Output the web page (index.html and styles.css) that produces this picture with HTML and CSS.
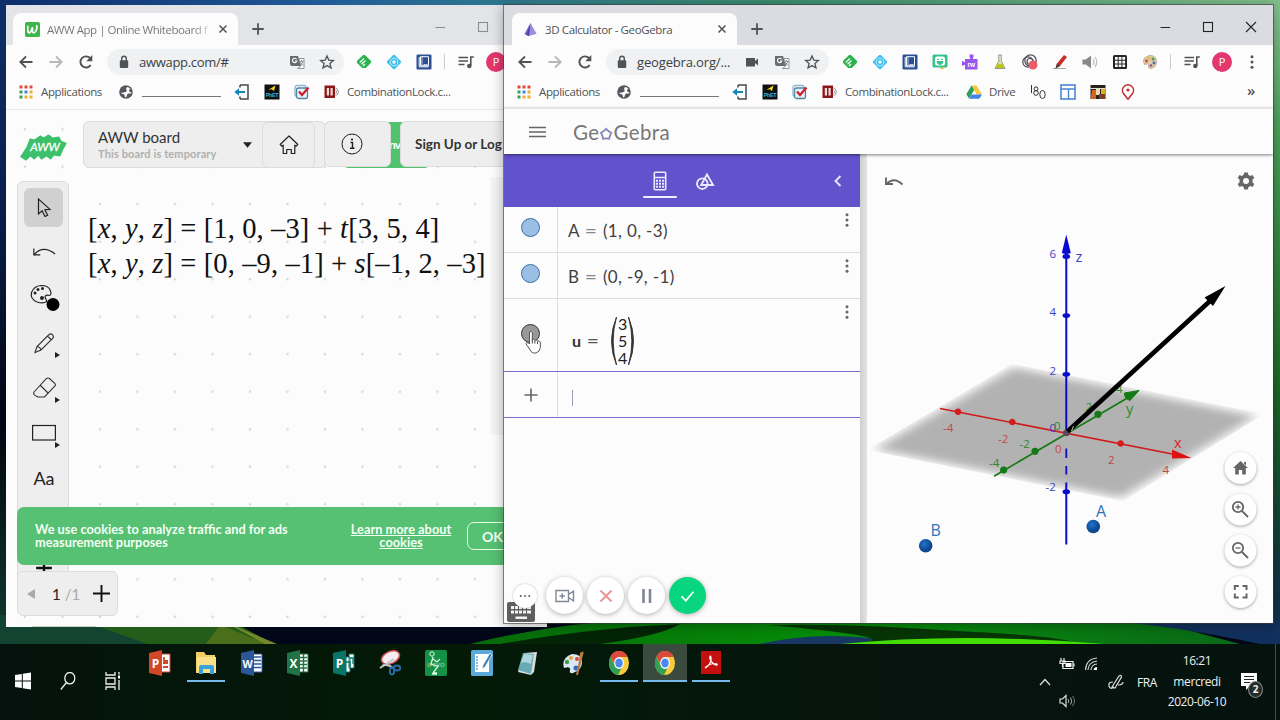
FILE: index.html
```html
<!DOCTYPE html>
<html lang="fr">
<head>
    <meta charset="UTF-8">
    <title>Desktop</title>
    <link rel="stylesheet" href="styles.css">
</head>
<body>
    <!-- Icons used by both browser windows and the taskbar -->
    <svg class="sprite" width="0" height="0">
        <defs>
            <symbol id="i-back" viewBox="0 0 16 16"><path d="M14.5 8H2.5M8 2.5L2.3 8L8 13.5" fill="none" stroke="currentColor" stroke-width="1.8"/></symbol>
            <symbol id="i-forward" viewBox="0 0 16 16"><path d="M1.5 8h12M8 2.5L13.7 8L8 13.5" fill="none" stroke="currentColor" stroke-width="1.8"/></symbol>
            <symbol id="i-reload" viewBox="0 0 16 16"><path d="M12.7 11A5.6 5.6 0 1 1 12.2 4.2" fill="none" stroke="currentColor" stroke-width="1.9"/><path d="M14.3 1v6.2H8.2z" fill="currentColor"/></symbol>
            <symbol id="i-lock" viewBox="0 0 16 16"><rect x="3.8" y="6.3" width="8.4" height="7.7" rx="1" fill="currentColor"/><path d="M5.7 7V4.6a2.3 2.3 0 0 1 4.6 0V7" fill="none" stroke="currentColor" stroke-width="1.4"/></symbol>
            <symbol id="i-camera" viewBox="0 0 16 16"><path d="M2 4h9v3l3-2.5v7L11 9v3.500H2z" fill="currentColor"/></symbol>
            <symbol id="i-translate" viewBox="0 0 16 16"><path d="M1 2h8l3 10H3a2 2 0 0 1-2-2z" fill="#686b6f"/><path d="M9.800 4.500H15V14.500H8.500L12 12z" fill="#fff" stroke="#85888c" stroke-width=".9"/><path d="M7.600 5.300A2.200 2.200 0 1 0 7.800 7H5.900" fill="none" stroke="#fff" stroke-width="1.100"/><path d="M11 7.300h3.500M12.700 6v1.300M14 7.300Q13.300 10 11.500 11M11.500 8.500L14 11.500" fill="none" stroke="#777" stroke-width=".8"/></symbol>
            <symbol id="i-star" viewBox="0 0 16 16"><path d="M8 1.900l1.800 4.200 4.600.4-3.500 3 1.100 4.500L8 11.600 4 14l1.100-4.500-3.500-3 4.600-.4z" fill="none" stroke="currentColor" stroke-width="1.300"/></symbol>
            <symbol id="i-feedly" viewBox="0 0 16 16"><path d="M8 .8q.8 0 1.400.6l5.400 5.300q1 1.100 0 2.200l-5 5H6.200l-5-5q-1-1.100 0-2.200l5.400-5.300Q7.200.8 8 .8z" fill="#2bb24c"/><path d="M3.800 8.500L8 4.300M5.500 10.300L9.500 6.500M7 12L9 10" stroke="#fff" stroke-width="1.200" fill="none"/></symbol>
            <symbol id="i-diamond" viewBox="0 0 16 16"><rect x="2.500" y="2.500" width="11" height="11" rx="1.500" transform="rotate(45 8 8)" fill="#3cc0f0"/><circle cx="8" cy="8" r="3.800" fill="none" stroke="#b5e7fa" stroke-width="1.100"/><circle cx="8" cy="8" r="1.700" fill="#fff"/></symbol>
            <symbol id="i-book" viewBox="0 0 16 16"><rect x=".5" y=".5" width="15" height="15" rx="1.200" fill="#2a4f94"/><path d="M4.500 2.700h8v9h-8zM3.200 3v9.800h9.500" fill="none" stroke="#fff" stroke-width="1"/><path d="M6 3v8.500M7.500 10.500h4" stroke="#c9d6ef" stroke-width=".9"/></symbol>
            <symbol id="i-music" viewBox="0 0 16 16"><path d="M.5 3.500h9.500M.5 7h9.500M.5 10.500h6" stroke="currentColor" stroke-width="1.500"/><path d="M12.800 12V3h3" fill="none" stroke="currentColor" stroke-width="1.600"/><circle cx="11.300" cy="12" r="2.200" fill="currentColor"/></symbol>
            <symbol id="i-dots" viewBox="0 0 16 16"><g fill="currentColor"><circle cx="8" cy="2.800" r="1.500"/><circle cx="8" cy="8" r="1.500"/><circle cx="8" cy="13.200" r="1.500"/></g></symbol>
            <symbol id="i-close" viewBox="0 0 16 16"><path d="M4 4l8 8M12 4l-8 8" stroke="currentColor" stroke-width="1.700"/></symbol>
            <symbol id="i-plus" viewBox="0 0 16 16"><path d="M8 2.300v11.400M2.300 8h11.400" stroke="currentColor" stroke-width="1.800"/></symbol>
            <symbol id="w-min" viewBox="0 0 16 16"><path d="M3.500 8.500h9.500" stroke="currentColor"/></symbol>
            <symbol id="w-max" viewBox="0 0 16 16"><rect x="3.500" y="3.500" width="9" height="9" fill="none" stroke="currentColor" stroke-width="1.100"/></symbol>
            <symbol id="w-close" viewBox="0 0 16 16"><path d="M3 3l10 10M13 3L3 13" stroke="currentColor" stroke-width="1.100"/></symbol>
            <symbol id="b-apps" viewBox="0 0 16 16"><path d="M1.500 1.500h3v3h-3zM6.500 1.500h3v3h-3zM11.500 1.500h3v3h-3z" fill="#e04838"/><path d="M1.500 6.500h3v3h-3z" fill="#34a058"/><path d="M6.500 6.500h3v3h-3z" fill="#4285e4"/><path d="M11.500 6.500h3v3h-3zM6.500 11.500h3v3h-3zM11.500 11.500h3v3h-3z" fill="#efb02c"/><path d="M1.500 11.500h3v3h-3z" fill="#34a058"/></symbol>
            <symbol id="b-globe" viewBox="0 0 16 16"><circle cx="8" cy="8" r="6.800" fill="#55585c"/><path d="M9 3Q7.500 4.500 8.500 6T6 8.500 2.800 7.500Q3 10 5 10T7 13.500Q9 13 9 11T11.500 9.500 13.300 8Q11.500 8.500 11 7T12.500 5Q11 3.200 9 3z" fill="#fff"/><path d="M6 4.500q1.500.5 1 2T4 7.300z" fill="#55585c"/></symbol>
            <symbol id="b-exit" viewBox="0 0 16 16"><path d="M6 1h8v14H6M6 1v2.500M6 15v-2.500" fill="none" stroke="#45484c" stroke-width="1.500"/><path d="M11 8H3" stroke="#1486ba" stroke-width="2"/><path d="M.3 8l4.700-3.800v7.600z" fill="#1486ba"/></symbol>
            <symbol id="b-phet" viewBox="0 0 16 16"><rect x=".5" y=".5" width="15" height="15" fill="#111"/><path d="M11.500 1.500L10 7 7.800 5.300 4.500 5.800z" fill="#f7e11e"/><text x="8" y="13.300" font-size="5.500" font-weight="bold" text-anchor="middle" fill="#31b2dd" font-family="Liberation Sans">PhET</text></symbol>
            <symbol id="b-check" viewBox="0 0 16 16"><rect x="1" y="1.500" width="11" height="11" rx="2" fill="none" stroke="#8fb4c8" stroke-width="1.300"/><rect x="2.500" y="4" width="11" height="10.500" rx="2" fill="#e8f1f6" stroke="#4e87a6" stroke-width="1.300"/><path d="M5 7.500l3 3.500 6.500-7.500" fill="none" stroke="#cf1f2e" stroke-width="2.300"/></symbol>
            <symbol id="b-combo" viewBox="0 0 16 16"><rect x=".5" y="1.500" width="10.500" height="12.500" fill="#8c1719"/><path d="M2.800 4h2.200v7.500H2.800zM6.500 4h2.200v7.500H6.500z" fill="#f5dada"/><path d="M11.500 4a3.900 3.900 0 0 1 0 7.500M11.500 6a2 2 0 0 1 0 3.500" fill="none" stroke="#777" stroke-width=".8"/></symbol>
            <symbol id="t-chrome" viewBox="0 0 20 24"><ellipse cx="10" cy="12" rx="10" ry="12" fill="#f7cb3c"/><path d="M1.300 6A10 12 0 0 1 18.700 6H10L6 14z" fill="#db4a3c"/><path d="M1.300 6A10 12 0 0 0 9 24L13.500 15 6 15z" fill="#2fa055"/><ellipse cx="10" cy="12" rx="4.900" ry="5.900" fill="#fff"/><ellipse cx="10" cy="12" rx="3.800" ry="4.600" fill="#4a8af0"/></symbol>
        </defs>
    </svg>

    <div class="desktop">
        <!-- Wallpaper -->
        <svg class="wallpaper" viewBox="0 0 1280 720">
            <defs>
                <linearGradient id="top-grad"><stop offset="0" stop-color="#0d2c6a"/><stop offset=".25" stop-color="#205a97"/><stop offset=".42" stop-color="#317d8c"/><stop offset=".6" stop-color="#3a8d70"/><stop offset="1" stop-color="#82bf8b"/></linearGradient>
                <linearGradient id="side-left" x2="0" y2="1"><stop offset="0" stop-color="#0f3068"/><stop offset=".3" stop-color="#0a1f4e"/><stop offset=".65" stop-color="#020512"/><stop offset="1" stop-color="#123c30"/></linearGradient>
                <linearGradient id="side-right" x2="0" y2="1"><stop offset="0" stop-color="#8ac596"/><stop offset=".2" stop-color="#4ba35a"/><stop offset=".6" stop-color="#1d6825"/><stop offset=".85" stop-color="#113b3c"/><stop offset="1" stop-color="#102c56"/></linearGradient>
                <linearGradient id="green-mid"><stop offset="0" stop-color="#066a09"/><stop offset=".5" stop-color="#069009"/><stop offset="1" stop-color="#0b6919"/></linearGradient>
            </defs>
            <rect width="1280" height="720" fill="#010718"/>
            <rect width="12" height="650" fill="url(#side-left)"/>
            <rect x="1266" width="14" height="650" fill="url(#side-right)"/>
            <rect width="1280" height="10" fill="url(#top-grad)"/>
            <path d="M0 615h110l105 30H0z" fill="#124431"/>
            <path d="M80 620h150l45 25H150z" fill="#245c1a"/>
            <path d="M220 625l50 20h-65z" fill="#4a6f1b"/>
            <path d="M225 622l52 22h-12z" fill="#75892b"/>
            <path d="M470 644Q560 622 640 620H1150L1240 644z" fill="url(#green-mid)"/>
            <path d="M500 644Q590 628 680 624Q660 636 600 644z" fill="#042406"/>
            <path d="M760 644Q810 632 870 638L930 644z" fill="#183762"/>
            <path d="M770 625Q850 623 975 632Q1060 636 1080 644H840Q930 640 770 625z" fill="#073505"/>
            <path d="M840 644Q960 632 1105 644z" fill="#43dc04"/>
            <path d="M1120 622Q1180 627 1260 644h20V620z" fill="#12305d"/>
        </svg>

        <!-- Left browser window: AWW whiteboard -->
        <div class="window window-aww">
            <div class="tab-strip">
                <div class="tab">
                    <svg class="favicon" viewBox="0 0 16 16"><rect width="16" height="16" rx="2" fill="#3db54a"/><path d="M3 4.500v5.500q1 3 3.500 0L8 5.500v5q1.500 2.500 3.700-1Q13.500 6 12.500 4" fill="none" stroke="#fff" stroke-width="1.800" stroke-linecap="round"/></svg>
                    <span class="tab-title aww-title">AWW App | Online Whiteboard f</span>
                    <svg class="tab-close"><use href="#i-close"/></svg>
                </div>
                <svg class="new-tab"><use href="#i-plus"/></svg>
                <div class="window-buttons">
                    <span><svg><use href="#w-min"/></svg></span>
                    <span><svg><use href="#w-max"/></svg></span>
                    <span><svg><use href="#w-close"/></svg></span>
                </div>
            </div>
            <div class="toolbar">
                <span class="cell"><svg><use href="#i-back"/></svg></span>
                <span class="cell muted"><svg><use href="#i-forward"/></svg></span>
                <span class="cell"><svg><use href="#i-reload"/></svg></span>
                <div class="omnibox">
                    <svg class="lock"><use href="#i-lock"/></svg>
                    <span class="url">awwapp.com/#</span>
                    <span class="cell"><svg><use href="#i-translate"/></svg></span>
                    <span class="cell"><svg><use href="#i-star"/></svg></span>
                </div>
                <span class="cell"><svg><use href="#i-feedly"/></svg></span>
                <span class="cell"><svg><use href="#i-diamond"/></svg></span>
                <span class="cell"><svg><use href="#i-book"/></svg></span>
                <span class="separator"></span>
                <span class="cell"><svg><use href="#i-music"/></svg></span>
                <span class="cell"><span class="avatar">P</span></span>
            </div>
            <div class="bookmarks">
                <svg><use href="#b-apps"/></svg><span class="bm-apps">Applications</span>
                <svg><use href="#b-globe"/></svg><span class="bm-blank"></span>
                <span class="cell"><svg><use href="#b-exit"/></svg></span>
                <span class="cell"><svg><use href="#b-phet"/></svg></span>
                <span class="cell"><svg><use href="#b-check"/></svg></span>
                <span class="cell"><svg><use href="#b-combo"/></svg></span>
                <span class="bm-combo">CombinationLock.c...</span>
            </div>
            <div class="board">
                <div class="board-header">
                    <svg class="aww-logo" viewBox="0 0 46 26"><path d="M1 22L7 13 10 5 14 6 20 2 23 4 28 1 32 4 38 3 40 7 45 9 42 14 39 21 33 20 30 24 26 21 21 24 18 20 14 24 10 21 6 25z" fill="#3cc06b" stroke="#3cc06b" stroke-width="1.500" stroke-linejoin="round"/><text x="10" y="16.500" font-size="12" font-family="Lato" font-style="italic" fill="#fff" stroke="#fff" stroke-width=".3" textLength="29" lengthAdjust="spacingAndGlyphs">AWW</text></svg>
                    <div class="board-name">
                        <div class="board-text"><b>AWW board</b><small>This board is temporary</small></div>
                        <svg class="caret" viewBox="0 0 10 6"><path d="M0 0h10L5 6z" fill="#222"/></svg>
                        <div class="home-box"><svg viewBox="0 0 22 22"><path d="M11 2L2.200 10.500 4 12.200 5.200 11.200V19.500H8.700V15.500H13.300V19.500H16.800V11.200L18 12.200 19.800 10.500z" fill="none" stroke="#222" stroke-width="1.200" stroke-linejoin="round"/></svg></div>
                    </div>
                    <div class="info-box"><svg viewBox="0 0 22 22"><circle cx="11" cy="11" r="10" fill="none" stroke="#222"/><path d="M9.500 9.500h2V15M9 15.300h4.500" fill="none" stroke="#222" stroke-width="1.400"/><circle cx="11" cy="6.500" r="1.100" fill="#222"/></svg></div>
                    <div class="invite-box">nv</div>
                    <div class="signup-box">Sign Up or Log In</div>
                </div>
                <div class="board-main">
                    <div class="tools">
                        <div class="tool selected"><svg viewBox="0 0 24 24"><path d="M6.500 3v15l3.600-3.300L13 20.500l2.600-1.300-2.700-5.500 5.100-.3z" fill="none" stroke="#222" stroke-width="1.200"/></svg></div>
                        <div class="tool"><svg viewBox="0 0 26 24"><path d="M2 7v7h7M2.500 13.500Q12 3 25 13" fill="none" stroke="#222" stroke-width="1.300"/></svg></div>
                        <div class="tool palette"><svg viewBox="0 0 32 30"><path d="M19 19.500Q15 22 9 20 2 17 3.500 10.500 6 4 13 3.500 21 3.500 22.500 9 24 13 21 13.500 17.500 12.500 17 15 18 17.500 19 19.500z" fill="none" stroke="#222" stroke-width="1.200"/><g fill="#222"><circle cx="7" cy="11" r="1.500"/><circle cx="10" cy="7.500" r="1.500"/><circle cx="14.500" cy="6.500" r="1.500"/><circle cx="14" cy="16" r="2"/></g><circle cx="25" cy="22.500" r="6.500"/></svg></div>
                        <div class="tool more"><svg viewBox="0 0 24 24"><path d="M3 21.500l2-6L17 3.500q2-1.300 3.700.4 1.300 1.600 0 3.600L9 19zM15.500 5l4 4M5 15.500Q8.500 16 9 19" fill="none" stroke="#333" stroke-width="1.100"/></svg></div>
                        <div class="tool more"><svg viewBox="0 0 24 24"><path d="M2 16L14.500 2.500q1.500-1 3 0L23 7.700q.8 1.300 0 2.300L12.500 21H6Q.500 19 2 16zM8.500 9.500L16 17" fill="none" stroke="#333" stroke-width="1.100"/></svg></div>
                        <div class="tool more"><svg viewBox="0 0 24 24"><rect x=".6" y="4.500" width="22.800" height="14.500" fill="none" stroke="#222" stroke-width="1.200"/></svg></div>
                        <div class="tool tool-text">Aa</div>
                    </div>
                    <div class="equations">
                        <p>[<i>x</i>, <i>y</i>, <i>z</i>] = [1, 0, –3] + <i>t</i>[3, 5, 4]</p>
                        <p>[<i>x</i>, <i>y</i>, <i>z</i>] = [0, –9, –1] + <i>s</i>[–1, 2, –3]</p>
                    </div>
                    <div class="side-panel"></div>
                </div>
                <svg class="hidden-plus"><use href="#i-plus"/></svg>
                <div class="cookies">
                    <p>We use cookies to analyze traffic and for ads measurement purposes</p>
                    <a>Learn more about cookies</a>
                    <span class="ok">OK</span>
                </div>
                <div class="pager">
                    <svg class="prev" viewBox="0 0 8 10"><path d="M8 0v10L0 5z" fill="#aaa"/></svg>
                    <span class="page-now">1</span><span class="page-all">/1</span>
                    <svg class="add-page" viewBox="0 0 16 16"><path d="M8 0v16M0 8h16" stroke="#111" stroke-width="1.800"/></svg>
                </div>
                <div class="board-edge"></div>
            </div>
        </div>

        <!-- Right browser window: GeoGebra 3D -->
        <div class="window window-geo">
            <div class="tab-strip">
                <div class="tab">
                    <svg class="favicon" viewBox="0 0 16 16"><path d="M8 1L1.500 13l5 2z" fill="#6c5fc0"/><path d="M8 1l6.500 11.500L6.500 15z" fill="#9a8fe0"/><path d="M8 1l-1.500 14L4 14z" fill="#4b3fa0"/></svg>
                    <span class="tab-title geo-title">3D Calculator - GeoGebra</span>
                    <svg class="tab-close"><use href="#i-close"/></svg>
                </div>
                <svg class="new-tab"><use href="#i-plus"/></svg>
                <div class="window-buttons">
                    <span><svg><use href="#w-min"/></svg></span>
                    <span><svg><use href="#w-max"/></svg></span>
                    <span><svg><use href="#w-close"/></svg></span>
                </div>
            </div>
            <div class="toolbar">
                <span class="cell"><svg><use href="#i-back"/></svg></span>
                <span class="cell muted"><svg><use href="#i-forward"/></svg></span>
                <span class="cell"><svg><use href="#i-reload"/></svg></span>
                <div class="omnibox">
                    <svg class="lock"><use href="#i-lock"/></svg>
                    <span class="url">geogebra.org/...</span>
                    <span class="cell"><svg><use href="#i-camera"/></svg></span>
                    <span class="cell"><svg><use href="#i-translate"/></svg></span>
                    <span class="cell"><svg><use href="#i-star"/></svg></span>
                </div>
                <span class="cell"><svg><use href="#i-feedly"/></svg></span>
                <span class="cell"><svg><use href="#i-diamond"/></svg></span>
                <span class="cell"><svg><use href="#i-book"/></svg></span>
                <span class="cell"><svg viewBox="0 0 16 16"><path d="M2 .5h12a1.500 1.500 0 0 1 1.500 1.500v10a1.500 1.500 0 0 1-1.500 1.500h-2L10 15.500 8 13.500H2A1.500 1.500 0 0 1 .5 12V2A1.500 1.500 0 0 1 2 .5z" fill="#36c48b"/><rect x="3" y="2.500" width="10" height="9" rx="2" fill="#fff"/><path d="M5 5.300h2M9 5.300h2M5 7.500h6q-.5 3-3 3t-3-3z" stroke="#36c48b" stroke-width="1" fill="#36c48b"/><path d="M9 13h4l-3 2.500z" fill="#f3b62c"/></svg></span>
                <span class="cell"><svg viewBox="0 0 16 16"><path d="M3 5h5V3.500h-.5v-3h4v3H11V5h4.500v10.500H3v-4.500H1.500v.8H0V7h1.500v1H3z" fill="#9a57ee"/><text x="9.200" y="12.500" font-size="6.500" font-weight="bold" text-anchor="middle" fill="#fff" font-family="Liberation Sans">rw</text></svg></span>
                <span class="cell"><svg viewBox="0 0 16 16"><path d="M6.300 1h3.400M6.800 1v6L3 14.500h10L9.200 7V1" fill="#eef0e8" stroke="#8a9080" stroke-width=".9"/><path d="M5.500 9.500h5l2.200 4.600H3.300z" fill="#b9c81c"/><circle cx="7.500" cy="7" r="1" fill="#d9c426"/></svg></span>
                <span class="cell"><svg viewBox="0 0 16 16"><g fill="none" stroke="#4a4a5a" stroke-width="1.200"><circle cx="8.500" cy="6.500" r="5.700"/><circle cx="6" cy="8" r="5.200"/><circle cx="8" cy="7.500" r="3"/></g><circle cx="11" cy="11" r="4.500" fill="#ee5c66"/></svg></span>
                <span class="cell"><svg viewBox="0 0 16 16"><path d="M1 14.500h13" stroke="#aaa"/><path d="M12 1l3 2-7 9-4.500 2.500L5 9.500z" fill="#cc2a2a"/><path d="M5 9.500l3 2.500-4.500 2.500z" fill="#444"/></svg></span>
                <span class="cell"><svg viewBox="0 0 16 16"><path d="M.5 5.500h3.300L9 1.500v13L3.800 10.500H.5z" fill="#888"/><path d="M11 5q2 3 0 6M13 3q3.500 5 0 10" fill="none" stroke="#bbb" stroke-width="1.200"/></svg></span>
                <span class="cell"><svg viewBox="0 0 16 16"><rect x="1" y="1" width="14" height="14" rx="1.500" fill="#252525"/><path d="M3 3h2.700v2.700H3zM6.700 3h2.700v2.700H6.700zM10.400 3h2.700v2.700h-2.700zM3 6.700h2.700v2.700H3zM6.700 6.700h2.700v2.700H6.700zM10.400 6.700h2.700v2.700h-2.700zM3 10.400h2.700v2.700H3zM6.700 10.400h2.700v2.700H6.700zM10.400 10.400h2.700v2.700h-2.700z" fill="#fff"/></svg></span>
                <span class="cell"><svg viewBox="0 0 16 16"><path d="M7 1.500Q14 1 14.500 7T9 14.500Q6 15 6.500 12T2.500 10.500Q-1 4 7 1.500z" fill="#decaa3" stroke="#a99066" stroke-width=".6"/><circle cx="4.500" cy="7" r="1.400" fill="#c94141"/><circle cx="7" cy="4" r="1.300" fill="#e6b92f"/><circle cx="11" cy="5" r="1.500" fill="#479b58"/><circle cx="12" cy="9" r="1.400" fill="#396fc0"/><circle cx="9" cy="11.500" r="1.300" fill="#884daf"/></svg></span>
                <span class="separator"></span>
                <span class="cell"><svg><use href="#i-music"/></svg></span>
                <span class="cell"><span class="avatar">P</span></span>
                <span class="cell"><svg><use href="#i-dots"/></svg></span>
            </div>
            <div class="bookmarks">
                <svg><use href="#b-apps"/></svg><span class="bm-apps">Applications</span>
                <svg><use href="#b-globe"/></svg><span class="bm-blank"></span>
                <span class="cell"><svg><use href="#b-exit"/></svg></span>
                <span class="cell"><svg><use href="#b-phet"/></svg></span>
                <span class="cell"><svg><use href="#b-check"/></svg></span>
                <span class="cell"><svg><use href="#b-combo"/></svg></span>
                <span class="bm-combo">CombinationLock.c...</span>
                <span class="cell"><svg viewBox="0 0 16 16"><path d="M5.500 1.500h5L16 10.500H10.700z" fill="#f8c83c"/><path d="M5.500 1.500L8.200 6 3 14.500.3 10.300z" fill="#2aa05c"/><path d="M5.500 10.500H16L13.300 14.800H3z" fill="#4384ea"/></svg></span>
                <span class="bm-drive">Drive</span>
                <span class="cell"><svg viewBox="0 0 16 16"><g fill="none" stroke="#333" stroke-width="1"><path d="M1.500 1v8"/><circle cx="6" cy="4.800" r="1.900"/><circle cx="6" cy="9" r="2.300"/><ellipse cx="12.500" cy="10.500" rx="2.700" ry="4"/></g></svg></span>
                <span class="cell"><svg viewBox="0 0 16 16"><rect x="1" y="1" width="14" height="14" fill="#fff" stroke="#4b86d8" stroke-width="1.600"/><path d="M1 5h14M8.500 5v10" stroke="#4b86d8" stroke-width="1.400"/></svg></span>
                <span class="cell"><svg viewBox="0 0 16 16"><rect x=".5" y="1" width="15" height="14" fill="#28221c"/><path d="M2 6h4v9H.5z" fill="#d8631f"/><path d="M6 5h4v6H6z" fill="#e9dfb4"/><path d="M11 5h4v5h-4z" fill="#e1ad25"/><path d="M9 10h6v5H9z" fill="#7c3d2b"/><path d="M.5 4.500h15" stroke="#e7e1d5" stroke-width="1"/></svg></span>
                <span class="cell"><svg viewBox="0 0 16 16"><path d="M8 15.200L3.500 9.500a5.500 5.500 0 1 1 9 0z" fill="#fff" stroke="#c52b31" stroke-width="1.500"/><circle cx="8" cy="6" r="1.600" fill="#c52b31"/></svg></span>
                <span class="overflow">»</span>
            </div>
            <div class="geo-header">
                <svg class="burger" viewBox="0 0 18 12"><path d="M0 1.500h17M0 6h17M0 10.500h17" stroke="#666" stroke-width="1.700"/></svg>
                <div class="geo-logo"><span>Ge</span><svg viewBox="0 0 14 14"><path d="M7 2.200l5 3.700-2 5.700H4.200L2.300 5.900z" fill="none" stroke="#77748c" stroke-width="1.500"/><g fill="#9990e0"><circle cx="7" cy="2.200" r="1.400"/><circle cx="12" cy="5.900" r="1.400"/><circle cx="10" cy="11.600" r="1.400"/><circle cx="4.200" cy="11.600" r="1.400"/><circle cx="2.300" cy="5.900" r="1.400"/></g></svg><span>Gebra</span></div>
            </div>
            <div class="geo-main">
                <div class="algebra">
                    <div class="algebra-tabs">
                        <div class="alg-tab active"><svg viewBox="0 0 20 20"><rect x="4.300" y="1.300" width="11.400" height="17.400" rx="1" fill="none" stroke="#ece9ff" stroke-width="1.600"/><path d="M4 6.500h12" stroke="#ece9ff" stroke-width="1.500"/><path d="M6 8.700h2v2H6zM9 8.700h2v2H9zM12 8.700h2v2h-2zM6 11.700h2v2H6zM9 11.700h2v2H9zM12 11.700h2v2h-2zM6 14.700h2v2H6zM9 14.700h2v2H9zM12 14.700h2v2h-2z" fill="#ece9ff"/></svg></div>
                        <div class="alg-tab"><svg viewBox="0 0 20 20"><g fill="none" stroke="#ece9ff" stroke-width="1.900"><circle cx="7.300" cy="12.700" r="5.300"/><path d="M12 3.500L18 14H6.200z"/></g></svg></div>
                        <svg class="collapse" viewBox="0 0 12 14"><path d="M8.500 2L3.500 7l5 5" fill="none" stroke="#ece9ff" stroke-width="1.900"/></svg>
                    </div>
                    <div class="row">
                        <div class="marble-cell"><span class="marble"></span></div>
                        <div class="formula">A <em>=</em> (1, 0, -3)</div>
                        <svg class="row-menu"><use href="#i-dots"/></svg>
                    </div>
                    <div class="row">
                        <div class="marble-cell"><span class="marble"></span></div>
                        <div class="formula">B <em>=</em> (0, -9, -1)</div>
                        <svg class="row-menu"><use href="#i-dots"/></svg>
                    </div>
                    <div class="row row-vector">
                        <div class="marble-cell"><span class="marble dark"></span></div>
                        <div class="formula vector"><b>u</b><em>=</em>
                            <svg viewBox="0 0 7 50"><path d="M6.500 1Q-3.500 25 6.500 49Q-.2 25 6.500 1z" fill="#333" stroke="#333" stroke-width=".9"/></svg>
                            <span class="column"><span>3</span><span>5</span><span>4</span></span>
                            <svg viewBox="0 0 7 50"><path d="M.5 1Q10.500 25 .5 49Q7.200 25 .5 1z" fill="#333" stroke="#333" stroke-width=".9"/></svg>
                        </div>
                        <svg class="row-menu"><use href="#i-dots"/></svg>
                    </div>
                    <div class="row row-input">
                        <div class="marble-cell"><svg class="add-row" viewBox="0 0 14 14"><path d="M7 .500v13M.500 7h13" stroke="#666" stroke-width="1.600"/></svg></div>
                        <div class="formula"><span class="text-caret"></span></div>
                    </div>
                </div>
                <div class="splitter"></div>
                <!-- 3D view, coordinates follow the desktop pixels -->
                <svg class="view3d" viewBox="867 155 406 468">
                    <defs>
                        <filter id="soft" x="-10%" y="-10%" width="120%" height="120%"><feGaussianBlur stdDeviation="6 4"/></filter>
                        <clipPath id="plane-clip"><path d="M1012 364L1264 414 1123 501 867 450z"/></clipPath>
                        <radialGradient id="ball" cx=".4" cy=".35"><stop offset="0" stop-color="#2272cc"/><stop offset="1" stop-color="#0c4790"/></radialGradient>
                    </defs>
                    <g clip-path="url(#plane-clip)"><path d="M1013.500 367.500L1256 416 1121 497.500 875 449z" fill="#b2b2b2" filter="url(#soft)"/></g>
                    <g stroke="#cf1b1b" fill="#d81c1c"><path d="M940 408.500L1180 455.500" stroke-width="1.600"/><circle cx="958" cy="411.700" r="2.800"/><circle cx="1012.300" cy="422" r="2.800"/><circle cx="1120.600" cy="443.500" r="2.800"/><path d="M1191.500 458l-19.500-8.500v9z" stroke="none" fill="#dd1212"/></g>
                    <g stroke="#157a15" fill="#157a15"><path d="M994 476.200L1130 396.500" stroke-width="1.700"/><circle cx="1003.700" cy="470" r="3.200"/><circle cx="1035" cy="451.300" r="3.200"/><circle cx="1098" cy="414.300" r="3.200"/><path d="M1139 390.500l-14.500 2.500q-.5 5.500 5.500 7.500z"/></g>
                    <g stroke="#0b0bc4" fill="#0b0bd0"><path d="M1066.300 252V433M1066.300 482.500V544.500" stroke-width="2"/><path d="M1066.300 448.500V458M1066.300 466V474.500" stroke-width="1.800"/><path d="M1066.300 234.500l4.500 18.500q-4.500 2-9 0z" stroke="none"/></g>
                    <g fill="#0b0bd0"><ellipse cx="1066.300" cy="256.500" rx="3.800" ry="2.500"/><ellipse cx="1066.300" cy="315.600" rx="3.800" ry="2.300"/><ellipse cx="1066.300" cy="374.300" rx="3.800" ry="2.300"/><ellipse cx="1066.300" cy="491.700" rx="3.800" ry="2.500"/></g>
                    <g class="z-label"><text x="1049.500" y="258">6</text><text x="1049.500" y="316">4</text><text x="1049.500" y="375">2</text><text x="1049.500" y="432">0</text><text x="1045.500" y="491">-2</text><text x="1075.500" y="262" class="axis">z</text></g>
                    <g class="x-label"><text x="943" y="432">-4</text><text x="998" y="442.500">-2</text><text x="1055" y="453">0</text><text x="1108" y="464">2</text><text x="1162.500" y="474">4</text><text x="1174" y="448" class="axis red">x</text></g>
                    <g class="y-label"><text x="989" y="467">-4</text><text x="1019.500" y="448">-2</text><text x="1054" y="429.500">0</text><text x="1085.500" y="411">2</text><text x="1116" y="392.500">4</text><text x="1126" y="413.500" class="axis">y</text></g>
                    <circle cx="1066.300" cy="433" r="3.300" fill="#5b4a5c"/>
                    <path d="M1067.500 431.500L1210 301" stroke="#000" stroke-width="4.600"/><path d="M1225.500 286l-21 11.500 8.500 8.500z"/>
                    <path d="M1071.500 431l2-5" stroke="#bbb" stroke-width="1"/>
                    <circle cx="1093.300" cy="526.500" r="6.800" fill="url(#ball)"/><circle cx="925.700" cy="545.800" r="6.800" fill="url(#ball)"/>
                    <g class="point-label"><text x="1096" y="516.500">A</text><text x="930.500" y="536">B</text></g>
                    <path d="M886 177.500v6.500h7M887 183.500Q894 176.500 902.500 184.500" fill="none" stroke="#666" stroke-width="1.900"/>
                    <g transform="translate(1246 181)"><path d="M-1.800-8.500h3.600l.5 2.300 1.900 1.100 2.300-.9 1.800 3-1.800 1.600v2.800l1.800 1.600-1.800 3-2.300-.9-1.900 1.100-.5 2.300h-3.600l-.5-2.300-1.900-1.100-2.300.9-1.800-3 1.800-1.600v-2.800l-1.800-1.600 1.800-3 2.300.9 1.900-1.100z" fill="#666"/><circle r="3" fill="#fcfcfc"/></g>
                    <g class="fab"><circle cx="1240.500" cy="468" r="16"/><circle cx="1240.500" cy="509.500" r="16"/><circle cx="1240.500" cy="550.500" r="16"/><circle cx="1240.500" cy="592" r="16"/></g>
                    <path d="M1240.500 461l7.500 7h-2.200v6.500h-3.600v-4.500h-3.400v4.500h-3.600V468H1233zM1244 462h2v3.500l-2-2z" fill="#666"/>
                    <g fill="none" stroke="#666" stroke-width="1.800"><circle cx="1238" cy="507" r="5.200"/><path d="M1235.500 507h5M1238 504.500v5" stroke-width="1.300"/><path d="M1242 511l6 6"/><circle cx="1238" cy="548" r="5.200"/><path d="M1235.500 548h5" stroke-width="1.300"/><path d="M1242 552l6 6"/><path d="M1234.800 590v-4h4M1242.500 586h4v4M1246.500 593.500v4h-4M1238.800 597.500h-4v-4" stroke-width="2"/></g>
                </svg>
            </div>
        </div>

        <!-- Mouse pointer -->
        <svg class="pointer" viewBox="0 0 18 24"><path d="M4.500 2q1.800-1.300 2.800.5v7q1.600-1 2.600.8 1.600-1.100 2.600.8 2-.8 2.800 1v5.400q-.5 4.500-4.300 5.500H8.500Q6 22.500 4.500 19L1 13.800q.5-2 2.500-.8l1 1z" fill="#fff" stroke="#555" stroke-width="1"/><path d="M7.300 9v4.500M9.900 10.500v3M12.500 11.500v2.500" stroke="#444"/></svg>

        <!-- Screen recorder controls -->
        <div class="recorder">
            <svg class="keyboard" viewBox="0 0 28 20"><rect width="28" height="20" rx="2" fill="#5f5f5f"/><path d="M4 4h3v3H4zM8 4h3v3H8zM12 4h3v3h-3zM16 4h3v3h-3zM20 4h4v3h-4zM4 8.500h3v3H4zM8 8.500h3v3H8zM12 8.500h3v3h-3zM16 8.500h3v3h-3zM20 8.500h4v3h-4zM8.500 14.500h11.500v2.500H8.500z" fill="#f2f2f2"/></svg>
            <div class="rec rec-small"><svg viewBox="0 0 14 4"><g fill="#555"><circle cx="2" cy="2" r="1.100"/><circle cx="7" cy="2" r="1.100"/><circle cx="12" cy="2" r="1.100"/></g></svg></div>
            <div class="rec"><svg viewBox="0 0 20 20"><path d="M1 4.500h12.500v11H1zM13.500 8.500L18.500 5v10L13.500 11.500M7.200 7.300v5.400M4.500 10h5.400" fill="none" stroke="#7f8894" stroke-width="1.400"/></svg></div>
            <div class="rec"><svg viewBox="0 0 20 20"><path d="M4.500 4.500l11 11M15.500 4.500l-11 11" stroke="#e99696" stroke-width="2"/></svg></div>
            <div class="rec"><svg viewBox="0 0 20 20"><path d="M6.500 3v14M13 3v14" stroke="#7f8894" stroke-width="2.600"/></svg></div>
            <div class="rec rec-done"><svg viewBox="0 0 20 20"><path d="M3 10.500l5 5L17 5" fill="none" stroke="#fff" stroke-width="2"/></svg></div>
        </div>

        <!-- Taskbar -->
        <div class="taskbar">
            <div class="system">
                <svg viewBox="0 0 16 18"><path d="M0 3l6.800-1v6.500H0zM7.800 1.800L16 .500v8H7.800zM0 9.500h6.800V16L0 15zM7.800 9.500H16v8l-8.200-1.200z" fill="#fff"/></svg>
                <svg viewBox="0 0 16 18"><g fill="none" stroke="#eee" stroke-width="1.300"><ellipse cx="9.800" cy="6.200" rx="5" ry="5.700"/><path d="M6.500 10.500L.800 17.500"/></g></svg>
                <svg viewBox="0 0 16 18"><path d="M1 0v3h9V0M1 6h9v6H1zM1 18v-3h9v3M14 0v2.500M14 8v10" fill="none" stroke="#eee" stroke-width="1.300"/><path d="M13 3.500h2v3h-2z" fill="#fff"/></svg>
            </div>
            <div class="apps">
                <div class="app"><svg viewBox="0 0 22 26"><path d="M12 4h9v18h-9z" fill="#fff" stroke="#d24726"/><path d="M14 13h5M14 17h5M15 7v4h4" stroke="#d24726" stroke-width="1.800" fill="none"/><path d="M0 3l13-3v26L0 23z" fill="#d24726"/><text x="6.500" y="17.500">P</text></svg></div>
                <div class="app running"><svg viewBox="0 0 22 26"><path d="M1 2h8l2 3h9v18H1z" fill="#f2cf63"/><path d="M2 7h19v16H2z" fill="#fbe08a"/><path d="M4 24v-7q0-2 2-2h11q2 0 2 2v7h-4v-5H8v5z" fill="#3aa1dd"/></svg></div>
                <div class="app"><svg viewBox="0 0 22 26"><path d="M12 4h9v18h-9z" fill="#fff" stroke="#2b579a"/><path d="M13 7h7M13 10.500h7M13 14h7M13 17.500h7" stroke="#2b579a" stroke-width="1.300"/><path d="M0 3l13-3v26L0 23z" fill="#2b579a"/><text x="6.500" y="17.500" class="narrow">W</text></svg></div>
                <div class="app"><svg viewBox="0 0 22 26"><path d="M12 4h9v18h-9z" fill="#fff" stroke="#217346"/><path d="M13 7.500h7M13 11h7M13 14.500h7M13 18h7M16.500 4v18" stroke="#217346" stroke-width="1.400"/><path d="M0 3l13-3v26L0 23z" fill="#217346"/><text x="6.500" y="17.500">X</text></svg></div>
                <div class="app"><svg viewBox="0 0 22 26"><path d="M13 7h4v15h-4zM16 4h5v14h-5z" fill="#fff" stroke="#077568"/><path d="M13 12h4v5M17 8h3v6" stroke="#077568" fill="none" stroke-width="1.300"/><path d="M0 3l13-3v26L0 23z" fill="#077568"/><text x="6.500" y="17.500">P</text></svg></div>
                <div class="app"><svg viewBox="0 0 22 26"><ellipse cx="11.500" cy="7.500" rx="9.500" ry="6" transform="rotate(-25 11.500 7.500)" fill="#f5eeee" stroke="#c94d55" stroke-width="1.500"/><path d="M1 18L15 9M3 16q5-3 11 2" stroke="#bfc4ca" stroke-width="2" fill="none"/><ellipse cx="13" cy="21" rx="2.200" ry="3.500" fill="none" stroke="#276eac" stroke-width="1.800"/><ellipse cx="18" cy="18" rx="3.200" ry="2.500" fill="none" stroke="#276eac" stroke-width="1.800"/></svg></div>
                <div class="app"><svg viewBox="0 0 22 26"><rect width="22" height="26" rx="2" fill="#149047"/><text x="11" y="17" class="faint">IPEVO</text><circle cx="7" cy="4" r="2.200" fill="none" stroke="#e8ffe8"/><path d="M8 7l-2 7 7 2-5 7h4M8 9l4 3 3-3M7 24h5" fill="none" stroke="#d9f5dc" stroke-width="1.300"/></svg></div>
                <div class="app"><svg viewBox="0 0 22 26"><rect width="22" height="26" rx="1.500" fill="#5ba9d9"/><path d="M4 4h14v18H4z" fill="#fff"/><path d="M5 7h2M5 10h2M5 13h2M5 16h2M5 19h2" stroke="#5ba9d9" stroke-width="1.300"/><path d="M19 3L12 15l-1 4 3-2 7-12z" fill="#347fb7" stroke="#fff" stroke-width=".7"/></svg></div>
                <div class="app"><svg viewBox="0 0 22 26"><path d="M7 3l13-1-3 20-3 3-13-3z" fill="#d8dede"/><path d="M6 3l11 1-3 20L1 20z" fill="#69a9b4"/><path d="M7 4l9 1-2 9Q8 11 4 13z" fill="#aed6dc"/></svg></div>
                <div class="app"><svg viewBox="0 0 22 26"><path d="M10 4Q20 4 20 12T11 23Q7 24 8 20T2 18Q-1 8 10 4z" fill="#dae6f2"/><circle cx="5" cy="12" r="2.200" fill="#3f9c4b"/><circle cx="9" cy="8" r="2" fill="#e8a630"/><circle cx="15" cy="9" r="2" fill="#d44d3b"/><circle cx="14" cy="18" r="2.500" fill="#326dc0"/><path d="M18 3q5-4 3 2l-5 20h-2l3-14z" fill="#bd7940"/></svg></div>
                <div class="app running"><svg viewBox="0 0 20 24" class="round"><use href="#t-chrome"/></svg></div>
                <div class="app running current"><svg viewBox="0 0 20 24" class="round"><use href="#t-chrome"/></svg></div>
                <div class="app running"><svg viewBox="0 0 20 24" class="round"><rect width="20" height="23" fill="#c4100e"/><path d="M4 17q5-2.500 6-8 .300-4-.8-4-1.500 2 2 6.500 2.500 3 5 2.500.5-1.500-3.500-1.500-5 .500-8.700 4.500z" fill="none" stroke="#fff" stroke-width="1.200"/></svg></div>
            </div>
            <div class="tray">
                <svg class="chevron" viewBox="0 0 12 8"><path d="M1 7l5-5.500L11 7" fill="none" stroke="#ddd" stroke-width="1.300"/></svg>
                <div class="tray-icons">
                    <svg viewBox="0 0 16 16"><path d="M4 5.500h10v7H4zM2 2v3M5 2v3M1 5h5v2.500H1zM3.500 7v4" fill="none" stroke="#eee" stroke-width="1.200"/><path d="M6.500 7h6v4h-6zM14.500 7.500h1v3h-1z" fill="#fff"/></svg>
                    <svg viewBox="0 0 16 16"><g fill="none" stroke="#ccc" stroke-width="1.200"><path d="M2.500 14Q3 3 14 2M5 14Q5.500 6 14 5M8 14Q8.500 8.500 14 8"/></g><path d="M10.500 14q.5-3 3.500-3v3z" fill="#fff"/></svg>
                    <svg class="volume" viewBox="0 0 16 16"><path d="M1 6h2.500L7 2.500v11L3.500 10H1z" fill="none" stroke="#ddd" stroke-width="1.200"/><path d="M9 6q1.500 2 0 4M11.500 4.500q2.500 3.500 0 7" fill="none" stroke="#aaa"/><path d="M13.500 3q4 5 0 10" fill="none" stroke="#777"/></svg>
                </div>
                <svg class="pen" viewBox="0 0 16 16"><path d="M4 13L11 2q2.500-1.500 2.500 1L7 14zM5 8Q0 8 1 12t5 1M10 11q5 0 5-3" fill="none" stroke="#ddd" stroke-width="1.200"/></svg>
                <span class="lang">FRA</span>
                <div class="clock"><span>16:21</span><span>mercredi</span><span>2020-06-10</span></div>
                <div class="notify"><svg viewBox="0 0 16 17"><path d="M0 0h16v13H9l-4 4v-4H0z" fill="#fff"/><path d="M3 3.500h10M3 6.500h10M3 9.500h6" stroke="#222" stroke-width="1.100"/></svg><span>2</span></div>
            </div>
        </div>
    </div>
</body>
</html>
```

FILE: styles.css
```css
* {
    box-sizing: border-box;
    margin: 0;
    padding: 0;
}

body {
    width: 1280px;
    height: 720px;
    overflow: hidden;
    font-family: "Open Sans", "Noto Sans", sans-serif;
    background: #010718;
}

svg {
    display: block;
    flex: none;
}

.sprite {
    position: absolute;
}

.desktop {
    position: relative;
    width: 1280px;
    height: 720px;
    overflow: hidden;
}

.wallpaper {
    position: absolute;
    width: 1280px;
    height: 720px;
}

/* Browser windows */
.window {
    position: absolute;
    top: 5px;
    display: flex;
    flex-direction: column;
    overflow: hidden;
    isolation: isolate;
    background: #fcfcfc;
    color: #505356;
}

.window-aww {
    left: 6px;
    width: 541px;
    height: 622px;
}

.window-geo {
    left: 504px;
    width: 769px;
    height: 618px;
    box-shadow: 0 0 0 1px rgba(60, 60, 60, 0.6), 0 2px 12px rgba(0, 0, 0, 0.35);
}

.tab-strip {
    display: flex;
    height: 40px;
    padding: 8px 0 0 7px;
    background: #e2e4e7;
}

.window-geo .tab-strip {
    padding-left: 8px;
    background: #dadce1;
}

.tab {
    display: flex;
    align-items: center;
    width: 225px;
    height: 32px;
    padding: 0 8px 0 12px;
    border-radius: 8px 8px 0 0;
    background: #fcfcfc;
}

.window-geo .tab {
    padding-left: 11px;
}

.favicon {
    width: 15px;
    height: 15px;
    margin-right: 7px;
}

.tab-title {
    width: 164px;
    font-size: 11.5px;
    letter-spacing: -0.38px;
    white-space: nowrap;
}

.aww-title {
    color: transparent;
    background: linear-gradient(90deg, #707376 90%, #e4e4e4 99%);
    -webkit-background-clip: text;
    background-clip: text;
    letter-spacing: -0.46px;
}

.tab-close {
    width: 14px;
    height: 14px;
    margin-left: auto;
}

.new-tab {
    width: 16px;
    height: 16px;
    margin: 8px 0 0 12px;
}

.window-buttons {
    display: flex;
    margin-left: auto;
    color: #222;
}

.window-aww .window-buttons {
    color: #8a8d90;
}

.window-geo .window-buttons {
    margin-right: 1px;
}

.window-buttons span {
    display: flex;
    justify-content: center;
    width: 43px;
    padding-top: 6px;
}

.window-buttons svg,
.toolbar svg,
.bookmarks svg {
    width: 16px;
    height: 16px;
}

.toolbar {
    display: flex;
    align-items: center;
    height: 33px;
    padding-left: 5px;
}

.window-geo .toolbar {
    padding-left: 6px;
}

.cell {
    display: flex;
    flex: none;
    align-items: center;
    justify-content: center;
    width: 30px;
}

.muted {
    color: #b5b7ba;
}

.omnibox {
    display: flex;
    align-items: center;
    width: 237px;
    height: 26px;
    margin: 0 5px 0 6px;
    padding: 0 2px 0 9px;
    border-radius: 13px;
    background: #eff1f2;
}

.window-geo .omnibox {
    width: 223px;
    margin-right: 6px;
    padding-left: 8px;
}

.url {
    flex: 1;
    margin-left: 7px;
    font-size: 13px;
    letter-spacing: -0.3px;
    color: #3c3f43;
    white-space: nowrap;
}

.window-geo .url {
    letter-spacing: -0.15px;
}

.separator {
    flex: none;
    width: 1px;
    height: 15px;
    margin: 0 6px 0 5px;
    background: #ccc;
}

.avatar {
    width: 20px;
    height: 20px;
    border-radius: 50%;
    background: #e4366f;
    color: #fff;
    font-size: 11px;
    line-height: 20px;
    text-align: center;
}

.bookmarks {
    display: flex;
    align-items: center;
    height: 27px;
    padding-left: 12px;
    font-size: 11.5px;
    letter-spacing: -0.38px;
    white-space: nowrap;
}

.bm-apps {
    width: 77px;
    margin-left: 7px;
}

.bm-blank {
    width: 79px;
    height: 1px;
    margin: 10px 6px 0 8px;
    background: #777;
}

.bm-combo {
    width: 114px;
}

.bm-drive {
    width: 34px;
}

.overflow {
    margin-left: auto;
    margin-right: 18px;
    margin-top: -3px;
    font-size: 15px;
    font-weight: 600;
}

/* AWW whiteboard */
.board {
    position: relative;
    flex: 1;
    margin-top: 4px;
    border-top: 1px solid #e9e9e9;
    background: radial-gradient(circle at 50% 50%, #d9d9d9 0.9px, transparent 1.7px) 0 0 / 37.5px 37.5px;
    background-position: 0.2px 0.5px;
}

.board-header {
    display: flex;
    align-items: flex-start;
    height: 71px;
    padding: 11px 0 0 14px;
    font-family: Lato, sans-serif;
}

.aww-logo {
    width: 47px;
    height: 27px;
    margin: 13px 16px 0 0;
}

.board-name,
.home-box,
.info-box,
.signup-box,
.tools,
.pager {
    border: 1px solid #dcdcdc;
    border-radius: 6px;
    background: #eee;
}

.board-name {
    display: flex;
    align-items: center;
    flex: none;
    width: 243px;
    height: 47px;
}

.board-text {
    display: flex;
    flex-direction: column;
    width: 145px;
    padding-left: 14px;
}

.board-text b {
    font-size: 15px;
    font-weight: normal;
    line-height: 18px;
    color: #333;
}

.board-text small {
    font-size: 11px;
    font-weight: bold;
    line-height: 15px;
    letter-spacing: 0.13px;
    color: #b0b0b0;
    white-space: nowrap;
}

.caret {
    width: 9px;
    height: 6px;
    margin-left: 14px;
}

.home-box {
    display: flex;
    align-items: center;
    justify-content: center;
    width: 53px;
    height: 46px;
    margin-left: 10px;
}

.home-box svg,
.info-box svg {
    width: 22px;
    height: 22px;
}

.info-box {
    z-index: 1;
    display: flex;
    flex: none;
    align-items: center;
    width: 67px;
    height: 46px;
    margin-left: -2px;
    padding-left: 16px;
}

.invite-box {
    flex: none;
    width: 87px;
    height: 46px;
    margin-left: -48px;
    margin-top: 1px;
    padding-left: 46px;
    border-radius: 5px;
    background: #50c16f;
    color: #fff;
    font-size: 12px;
    font-weight: bold;
    letter-spacing: -1px;
    line-height: 46px;
}

.signup-box {
    z-index: 1;
    flex: none;
    width: 150px;
    height: 46px;
    margin-left: -30px;
    padding-left: 14px;
    color: #333;
    font-size: 13.5px;
    font-weight: bold;
    line-height: 44px;
    white-space: nowrap;
}

.board-main {
    display: flex;
    align-items: flex-start;
    height: 326px;
}

.tools {
    width: 52px;
    height: 434px;
    margin-left: 11px;
    padding: 3px 0;
}

.tool {
    display: flex;
    position: relative;
    align-items: center;
    justify-content: center;
    width: 50px;
    height: 45px;
    padding-left: 2px;
}

.tool svg {
    width: 24px;
    height: 24px;
}

.tool.selected {
    width: 39px;
    height: 39px;
    margin: 3px 0 3px 6px;
    padding: 0;
    border-radius: 6px;
    background: #d0d0d0;
}

.tool.palette svg {
    width: 32px;
    height: 30px;
    margin-top: -1px;
    margin-right: 1px;
}

.tool.more::after {
    content: "";
    position: absolute;
    right: 8px;
    bottom: 7px;
    border-left: 5px solid #222;
    border-top: 3px solid transparent;
    border-bottom: 3px solid transparent;
}

.tool-text {
    font: 18px Lato, sans-serif;
    color: #222;
}

.equations {
    flex: none;
    width: 402px;
    padding: 30px 0 0 19px;
    font: 28.5px/35px "Liberation Serif", serif;
    letter-spacing: 0.12px;
    color: #111;
    white-space: nowrap;
}

.side-panel {
    width: 60px;
    height: 258px;
    margin: -4px 0 0 20px;
    background: rgba(0, 0, 0, 0.03);
}

.hidden-plus {
    position: absolute;
    left: 27px;
    top: 447px;
    width: 22px;
    height: 22px;
    color: #111;
}

.cookies {
    position: relative;
    display: flex;
    align-items: center;
    height: 58px;
    margin-left: 11px;
    padding-left: 18px;
    border-radius: 7px;
    background: #56c073;
    color: #f3fff3;
    font: bold 12.8px/13px Lato, sans-serif;
}

.cookies p {
    flex: none;
    width: 275px;
}

.cookies a {
    flex: none;
    width: 110px;
    margin-left: 36px;
    text-align: center;
    text-decoration: underline;
}

.ok {
    width: 60px;
    height: 28px;
    margin-left: 11px;
    padding-left: 14px;
    border: 1px solid #e8ffe8;
    border-radius: 7px;
    font-size: 14px;
    line-height: 27px;
}

.pager {
    position: relative;
    display: flex;
    align-items: center;
    width: 101px;
    height: 45px;
    margin: 6px 0 0 11px;
    padding-left: 9px;
    font: 15px Lato, sans-serif;
}

.prev {
    width: 8px;
    height: 10px;
}

.page-now {
    margin-left: 17px;
    color: #222;
}

.page-all {
    margin-left: 4px;
    color: #aaa;
}

.add-page {
    width: 17px;
    height: 17px;
    margin-left: 13px;
}

.board-edge {
    width: 64px;
    height: 1px;
    margin: 10px 0 0 26px;
    background: #c5cdc5;
}

/* GeoGebra */
.geo-header {
    z-index: 1;
    display: flex;
    align-items: center;
    height: 46px;
    margin-top: 3px;
    padding-left: 25px;
    border-top: 1px solid #e4e4e4;
    background: #fcfcfc;
    box-shadow: 0 1px 3px rgba(0, 0, 0, 0.5);
}

.burger {
    width: 18px;
    height: 12px;
    margin-right: 26px;
}

.geo-logo {
    display: flex;
    align-items: center;
    font: 20.5px Lato, sans-serif;
    letter-spacing: 0.4px;
    color: #777;
}

.geo-logo svg {
    width: 14px;
    height: 14px;
    margin-top: 4px;
}

.geo-main {
    display: flex;
    flex: 1;
}

.algebra {
    width: 356px;
}

.algebra-tabs {
    display: flex;
    height: 53px;
    padding-left: 133px;
    background: #6253cd;
}

.alg-tab {
    display: flex;
    justify-content: center;
    width: 45px;
    padding-top: 17px;
}

.alg-tab svg {
    width: 20px;
    height: 20px;
}

.alg-tab.active::after {
    content: "";
    position: absolute;
    width: 34px;
    height: 2px;
    margin-top: 25px;
    border-radius: 1px;
    background: #f1efff;
}

.collapse {
    width: 12px;
    height: 14px;
    margin: 20px 0 0 105px;
}

.row {
    display: flex;
    height: 46px;
    border-bottom: 1px solid #dcdcdc;
}

.marble-cell {
    display: flex;
    align-items: flex-start;
    justify-content: center;
    width: 54px;
    padding-top: 11px;
    border-right: 1px solid #dcdcdc;
}

.marble {
    width: 19px;
    height: 19px;
    border: 1px solid #3b6ea5;
    border-radius: 50%;
    background: #9bbfe4;
}

.marble.dark {
    border-color: #333;
    background: #989898;
}

.formula {
    width: 281px;
    padding: 1px 0 0 10px;
    font: 17px/46px Lato, sans-serif;
    letter-spacing: 0.35px;
    color: #3f3f3f;
    white-space: pre;
}

.formula em {
    display: inline-block;
    margin: 0 2.5px 0 1.5px;
    transform: scaleX(1.25);
    font-style: normal;
    color: #888;
}

.row-menu {
    width: 16px;
    height: 18px;
    margin-top: 4px;
    color: #666;
}

.row-vector {
    height: 73px;
    border-color: #7a6fd0;
}

.row-vector .marble-cell {
    padding-top: 25px;
}

.vector {
    display: flex;
    align-items: center;
    padding: 11px 0 0 14px;
    letter-spacing: 0;
    line-height: 17px;
    white-space: normal;
}

.vector b {
    font-size: 16px;
    color: #333;
}

.vector em {
    margin: 0 12px 0 7px;
    color: #555;
}

.vector svg {
    width: 7px;
    height: 50px;
}

.column {
    display: flex;
    flex-direction: column;
    margin: 0 1px;
    font-size: 16px;
    color: #222;
}

.row-input {
    border-color: #7a6fd0;
}

.row-input .marble-cell {
    align-items: center;
    padding-top: 0;
}

.add-row {
    width: 14px;
    height: 14px;
}

.text-caret {
    display: block;
    width: 1px;
    height: 16px;
    margin: 17px 0 0 4px;
    background: #9d9dba;
}

.splitter {
    width: 7px;
    background: linear-gradient(90deg, #cfcfcf, #e4e4e4);
}

.view3d {
    width: 406px;
    height: 468px;
    margin-top: 1px;
    background: #fcfcfc;
    font-family: "Open Sans", sans-serif;
}

.view3d text {
    font-size: 11.5px;
}

.z-label {
    fill: #4040c8;
}

.x-label {
    fill: #bf4848;
}

.y-label {
    fill: #2b8a2b;
}

.view3d .axis {
    font-size: 14.5px;
}

.red {
    fill: #dc2424;
}

.point-label {
    fill: #2c74b8;
}

.view3d .point-label text {
    font-size: 16px;
}

.fab {
    fill: #fefefe;
    filter: drop-shadow(0 1px 1.5px rgba(0, 0, 0, 0.35));
}

.pointer {
    position: absolute;
    left: 525px;
    top: 330px;
    width: 18px;
    height: 24px;
}

/* Screen recorder */
.recorder {
    position: absolute;
    left: 513px;
    top: 577px;
    display: flex;
    align-items: center;
    gap: 4px;
}

.keyboard {
    position: absolute;
    left: -6px;
    top: 25px;
    width: 28px;
    height: 20px;
}

.rec {
    position: relative;
    display: flex;
    align-items: center;
    justify-content: center;
    width: 37px;
    height: 37px;
    border-radius: 50%;
    background: #fff;
    box-shadow: 0 1px 5px rgba(0, 0, 0, 0.3);
}

.rec svg {
    width: 20px;
    height: 20px;
}

.rec-small {
    width: 24px;
    height: 24px;
    margin-right: 5px;
    box-shadow: 0 0 2px rgba(0, 0, 0, 0.3);
}

.rec-small svg {
    width: 12px;
    height: 4px;
}

.rec-done {
    background: #08d67e;
}

.rec-done svg {
    width: 17px;
}

/* Taskbar */
.taskbar {
    position: absolute;
    left: 0;
    top: 644px;
    display: flex;
    width: 1276px;
    height: 76px;
    padding-top: 0;
    padding-left: 0.5px;
    border-right: 1px solid #46534c;
    background: linear-gradient(90deg, #04130d, #041a06 35%, #04180a 50%, #06130f 75%, #05130f);
    box-shadow: 4px 0 0 #05130f;
    color: #f0f0f0;
    font-size: 12px;
    letter-spacing: -0.4px;
}

.system {
    display: flex;
    gap: 29px;
    width: 137px;
    padding: 28px 0 0 14px;
}

.system svg {
    width: 16px;
    height: 18px;
}

.apps {
    display: flex;
}

.app {
    display: flex;
    align-items: center;
    justify-content: center;
    width: 45.9px;
    height: 38px;
}

.app svg {
    width: 22px;
    height: 26px;
}

.app .round {
    width: 20px;
    height: 24px;
}

.app text {
    font: bold 12px "Open Sans", sans-serif;
    fill: #fff;
    text-anchor: middle;
    letter-spacing: 0;
}

.app .narrow {
    font-size: 10.5px;
}

.app .faint {
    font-size: 6px;
    fill: #7cc795;
}

.app.running {
    background: linear-gradient(#76b9ed, #76b9ed) 50% 100% / 38px 2px no-repeat;
}

.app.current {
    background: linear-gradient(#76b9ed, #76b9ed) 50% 100% / 44px 2px no-repeat, linear-gradient(#3a4a3c, #3a4a3c) 50% 0 / 44px 38px no-repeat;
}

.tray {
    display: flex;
    align-items: center;
    margin-left: auto;
    margin-right: 11px;
}

.chevron {
    width: 12px;
    height: 8px;
}

.tray-icons {
    display: grid;
    grid-template-columns: 24px 24px;
    row-gap: 21px;
    margin: 0 0 0 8px;
}

.tray-icons svg {
    width: 16px;
    height: 16px;
}

.pen {
    width: 18px;
    height: 16px;
}

.lang {
    margin-left: 12px;
}

.clock {
    display: flex;
    flex-direction: column;
    width: 68px;
    margin-left: 6px;
    line-height: 20.5px;
    text-align: center;
}

.notify {
    position: relative;
    width: 23px;
    height: 28px;
    margin-left: 10px;
    padding-top: 5px;
}

.notify svg {
    width: 16px;
    height: 17px;
}

.notify span {
    position: absolute;
    left: 7px;
    top: 13px;
    width: 15px;
    height: 17px;
    border: 1px solid #888;
    border-radius: 50%;
    background: #222c28;
    font-size: 10px;
    font-weight: bold;
    line-height: 15px;
    text-align: center;
}
```
